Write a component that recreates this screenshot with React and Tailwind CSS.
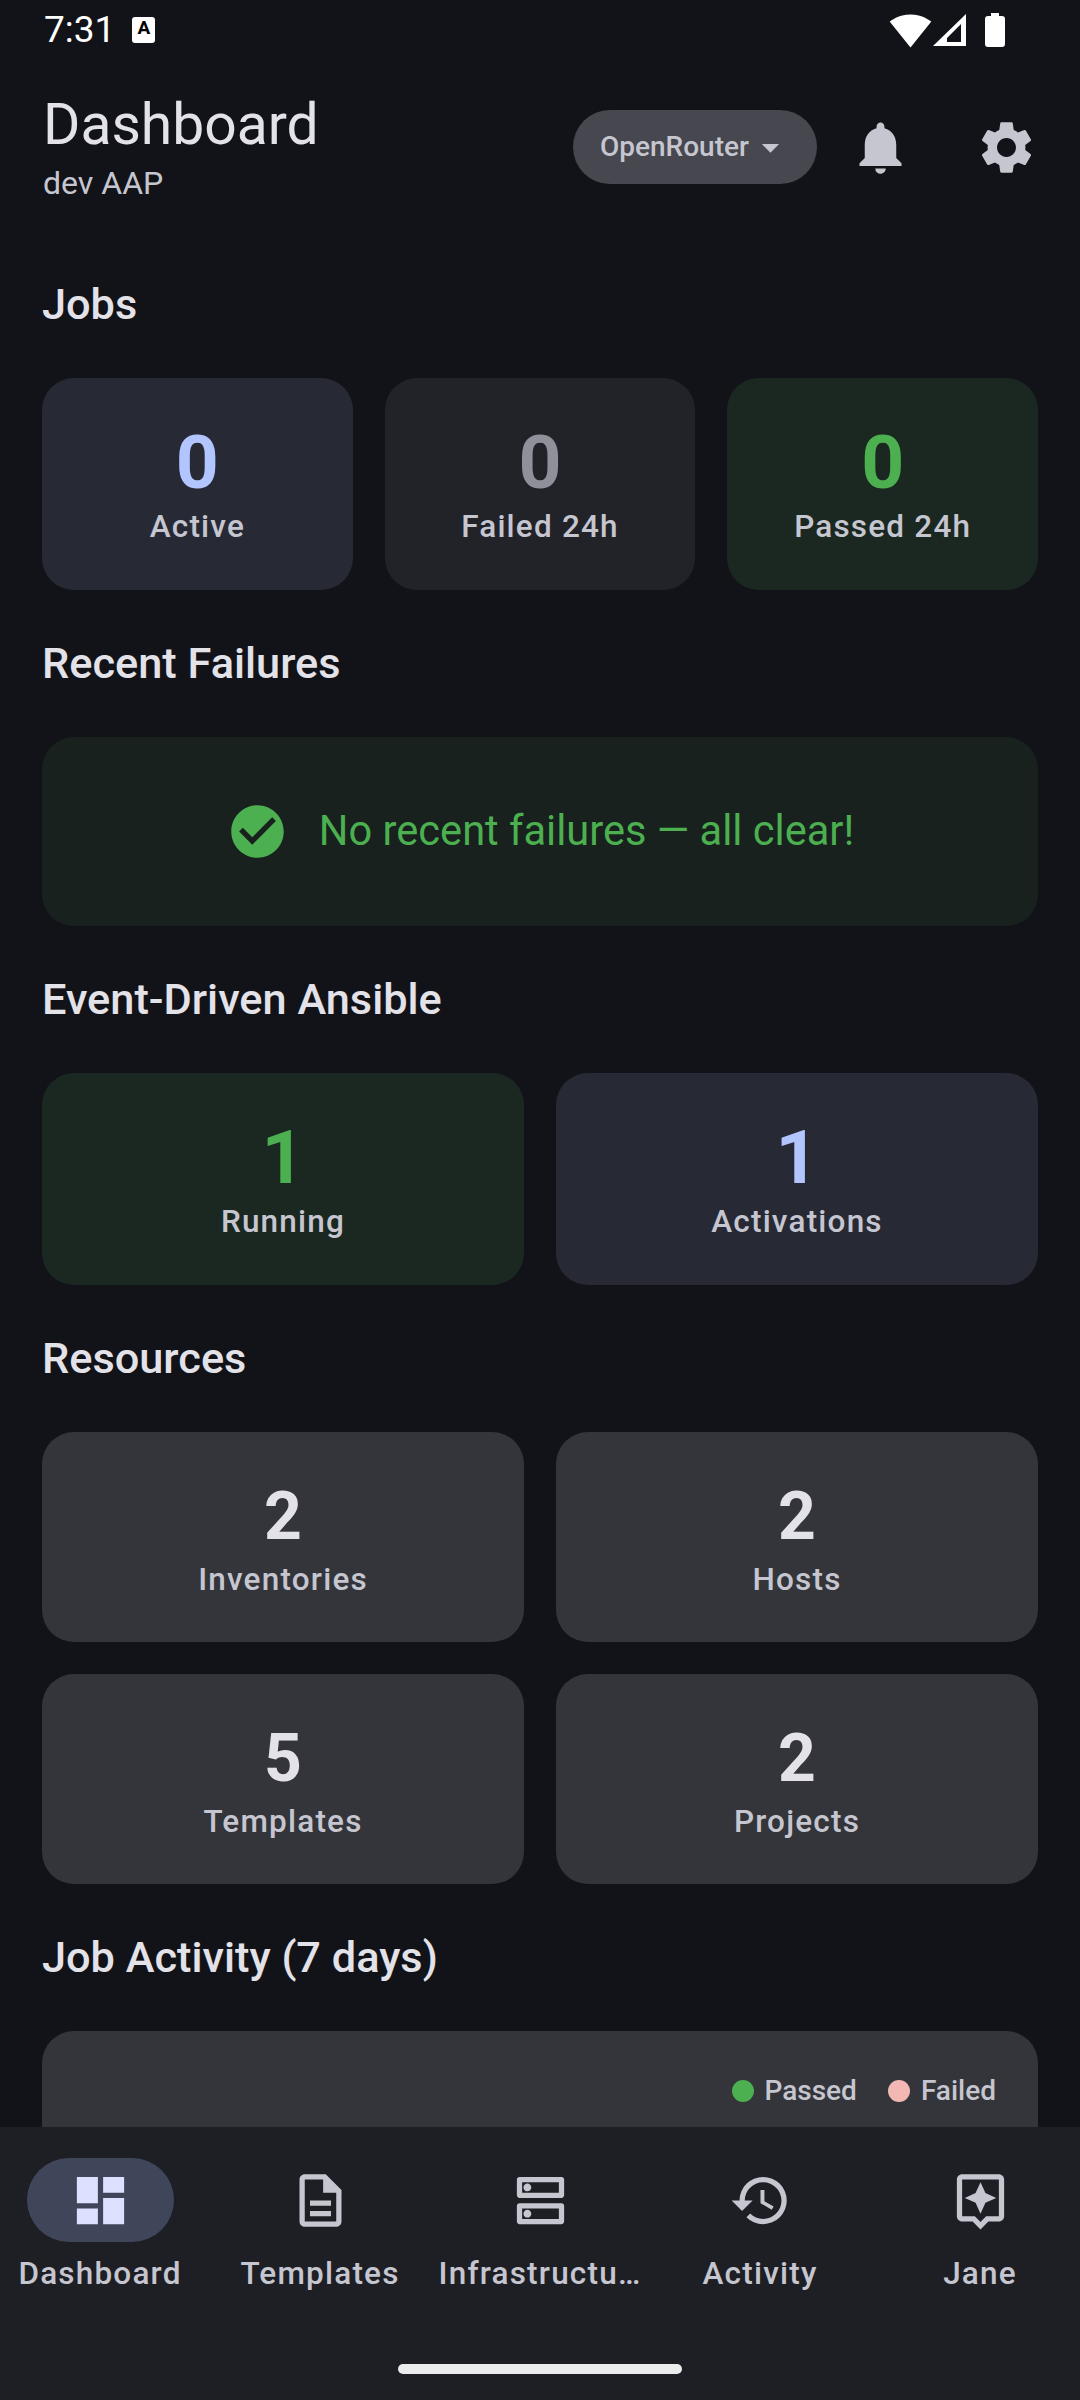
import React from "react"
import { MdNotifications, MdSettings, MdCheckCircle, MdDashboard, MdOutlineDescription, MdOutlineDns, MdHistory, MdOutlineAssistant, MdSignalWifi4Bar, MdArrowDropDown } from "react-icons/md"

const jobs = [
    { value: "0", label: "Active", bg: "bg-[#272a35]", color: "text-[#b3c5ff]" },
    { value: "0", label: "Failed 24h", bg: "bg-[#212329]", color: "text-[#8f909a]" },
    { value: "0", label: "Passed 24h", bg: "bg-[#1b2821]", color: "text-[#4caf50]" },
]

const resources = [
    { value: "2", label: "Inventories" },
    { value: "2", label: "Hosts" },
    { value: "5", label: "Templates" },
    { value: "2", label: "Projects" },
]

const nav = [
    { label: "Dashboard", Icon: MdDashboard, active: true },
    { label: "Templates", Icon: MdOutlineDescription },
    { label: "Infrastructu…", Icon: MdOutlineDns },
    { label: "Activity", Icon: MdHistory },
    { label: "Jane", Icon: MdOutlineAssistant },
]

const Heading = ({ children }) => (
    <h2 className="text-[43.3px] leading-[63px] font-medium text-[#e3e2e9] mt-[42px] mb-[42px]">{children}</h2>
)

const Label = ({ children }) => (
    <div className="text-[31.5px] leading-[42px] font-medium tracking-[1.2px] text-[#c6c6d0]">{children}</div>
)

const Stat = ({ value, label, bg, color }) => (
    <div className={`flex-1 h-[212px] rounded-[32px] flex flex-col items-center pt-[42px] ${bg}`}>
        <div className={`text-[75px] leading-[84px] font-bold mb-[2px] ${color}`}>{value}</div>
        <Label>{label}</Label>
    </div>
)

const ResourceStat = ({ value, label }) => (
    <div className="h-[210px] rounded-[32px] flex flex-col items-center pt-[43px] bg-[#33353a]">
        <div className="text-[66px] leading-[84px] font-bold text-[#e3e2e9]">{value}</div>
        <Label>{label}</Label>
    </div>
)

export default function App() {
    return (
        <div className="w-[1080px] h-[2400px] overflow-hidden flex flex-col bg-[#121318] font-['Roboto',sans-serif]">
            <div className="flex-1 min-h-0 overflow-hidden">
                {/* status bar */}
                <div className="h-[60px] pl-[44px] pr-[75px] flex items-center text-white">
                    <span className="text-[37px] leading-[60px]">7:31</span>
                    <span className="ml-[17px] w-[23px] h-[26px] bg-white rounded-[3px] text-black text-[19px] leading-[22px] font-bold text-center">A</span>
                    <div className="ml-auto flex items-center">
                        <MdSignalWifi4Bar className="w-[43px] h-[43px]" />
                        <svg viewBox="0 0 33 32" className="w-[33px] h-[32px] ml-[1px]">
                            <path d="M33 0V32H0z M28 10 14 24V28H28z" fill="white" fillRule="evenodd" />
                        </svg>
                        <svg viewBox="0 0 20 34" className="w-[20px] h-[34px] ml-[19px]">
                            <path d="M6 0h8v3h3a3 3 0 0 1 3 3v25a3 3 0 0 1-3 3H3a3 3 0 0 1-3-3V6a3 3 0 0 1 3-3h3z" fill="white" />
                        </svg>
                    </div>
                </div>

                {/* header */}
                <div className="h-[171px] pl-[43px] pr-[42px] flex items-start">
                    <div className="pt-[32px]">
                        <div className="text-[57px] leading-[66px] text-[#e3e2e9]">Dashboard</div>
                        <div className="text-[32px] leading-[42px] text-[#c6c6d0] mt-[4px]">dev AAP</div>
                    </div>
                    <div className="ml-auto mt-[50px] flex items-center">
                        <div className="w-[244px] h-[74px] rounded-full bg-[#47474f] flex items-center pl-[27px] text-[#c6c6d0]">
                            <span className="text-[28px] font-medium">OpenRouter</span>
                            <MdArrowDropDown className="w-[41px] h-[41px] ml-[1px]" />
                        </div>
                        <MdNotifications className="w-[63px] h-[63px] ml-[32px] text-[#c6c6d0]" />
                        <MdSettings className="w-[63px] h-[63px] ml-[63px] text-[#c6c6d0]" />
                    </div>
                </div>

                <div className="px-[42px]">
                    <Heading>Jobs</Heading>
                    <div className="flex gap-[32px]">
                        {jobs.map((j) => <Stat key={j.label} {...j} />)}
                    </div>

                    <Heading>Recent Failures</Heading>
                    <div className="h-[189px] rounded-[32px] bg-[#18211e] flex items-center justify-center text-[#4caf50]">
                        <MdCheckCircle className="w-[63px] h-[63px]" />
                        <span className="ml-[30px] text-[41.6px]">No recent failures — all clear!</span>
                    </div>

                    <Heading>Event-Driven Ansible</Heading>
                    <div className="flex gap-[32px]">
                        <Stat value="1" label="Running" bg="bg-[#1b2821]" color="text-[#4caf50]" />
                        <Stat value="1" label="Activations" bg="bg-[#272a35]" color="text-[#b3c5ff]" />
                    </div>

                    <Heading>Resources</Heading>
                    <div className="grid grid-cols-2 gap-[32px]">
                        {resources.map((r) => <ResourceStat key={r.label} {...r} />)}
                    </div>

                    <Heading>Job Activity (7 days)</Heading>
                    <div className="h-[300px] rounded-[32px] bg-[#33353a] pt-[42px] pr-[42px] flex justify-end items-start text-[28px] leading-[36px] font-medium text-[#c6c6d0]">
                        <div className="flex items-center">
                            <span className="w-[22px] h-[22px] rounded-full bg-[#4caf50]" />
                            <span className="ml-[10px]">Passed</span>
                            <span className="w-[22px] h-[22px] rounded-full bg-[#f4b8b4] ml-[31px]" />
                            <span className="ml-[11px]">Failed</span>
                        </div>
                    </div>
                </div>
            </div>

            {/* bottom nav */}
            <div className="h-[273px] shrink-0 bg-[#1e1f25] flex flex-col">
                <div className="flex justify-center overflow-hidden pt-[31px]">
                    {nav.map(({ label, Icon, active }) => (
                        <div key={label} className="w-[220px] shrink-0 flex flex-col items-center">
                            <div className={`w-[147px] h-[84px] rounded-full flex items-center justify-center ${active ? "bg-[#404659] text-[#dce1ff]" : "text-[#c6c6d0]"}`}>
                                <Icon className="w-[63px] h-[63px]" />
                            </div>
                            <div className="mt-[11px] text-[31.5px] leading-[42px] font-medium tracking-[1.2px] text-[#c6c6d0] whitespace-nowrap">{label}</div>
                        </div>
                    ))}
                </div>
                <div className="mt-auto mb-[26px] mx-auto w-[284px] h-[10px] rounded-full bg-[#ececec]" />
            </div>
        </div>
    )
}
